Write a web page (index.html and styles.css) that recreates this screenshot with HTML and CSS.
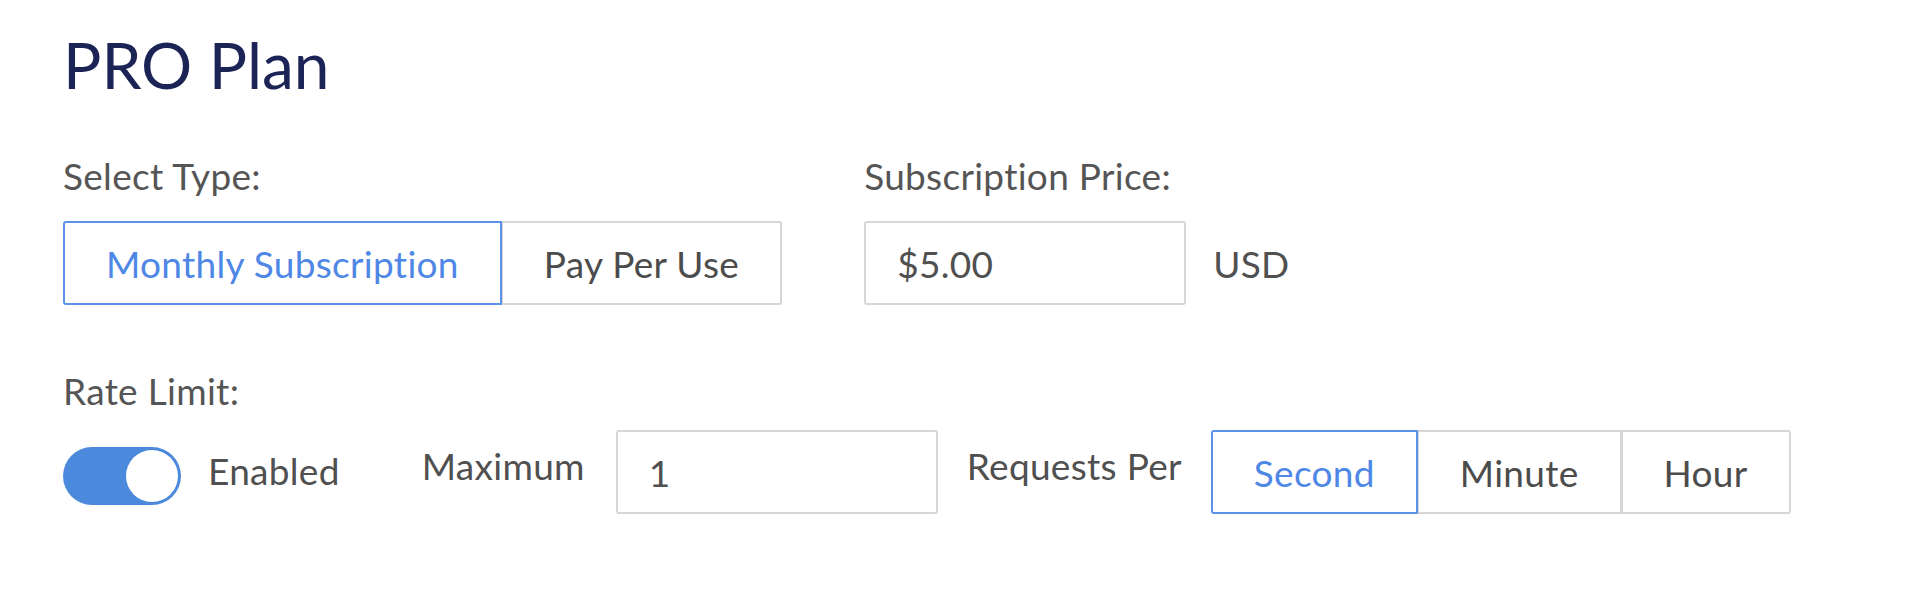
FILE: index.html
```html
<!DOCTYPE html>
<html lang="en">
<head>
<meta charset="utf-8">
<title>PRO Plan</title>
<link rel="stylesheet" href="styles.css">
</head>
<body>
<div class="page">
  <h1 class="title">PRO Plan</h1>
  <div class="row">
    <div class="field">
      <div class="label">Select Type:</div>
      <div class="seg">
        <button class="seg-btn active">Monthly Subscription</button>
        <button class="seg-btn">Pay Per Use</button>
      </div>
    </div>
    <div class="field">
      <div class="label">Subscription Price:</div>
      <div class="inline">
        <input class="text-input" type="text" value="$5.00">
        <span class="unit">USD</span>
      </div>
    </div>
  </div>
  <div class="field rate">
    <div class="label">Rate Limit:</div>
    <div class="controls">
      <div class="toggle-wrap">
        <span class="toggle on"><span class="knob"></span></span>
        <span class="toggle-label">Enabled</span>
      </div>
      <span class="inline-label">Maximum</span>
      <input class="text-input" type="text" value="1">
      <span class="inline-label">Requests Per</span>
      <div class="seg">
        <button class="seg-btn active">Second</button>
        <button class="seg-btn">Minute</button>
        <button class="seg-btn">Hour</button>
      </div>
    </div>
  </div>
</div>
</body>
</html>
```

FILE: styles.css
```css
* {
  box-sizing: border-box;
}

html, body {
  margin: 0;
  padding: 0;
  background: #ffffff;
}

body {
  font-family: "Lato", "Open Sans", sans-serif;
  font-size: 37px;
  letter-spacing: 0.3px;
  color: #505050;
}

.page {
  padding: 28px 0 0 63px;
}

.title {
  margin: 0;
  font-size: 64px;
  font-weight: 400;
  line-height: 74px;
  letter-spacing: 0;
  color: #1c2456;
}

.row {
  display: flex;
  gap: 82px;
  margin-top: 52px;
}

.field {
  display: flex;
  flex-direction: column;
  gap: 24px;
}

.label {
  font-size: 37px;
  line-height: 43px;
  color: #555555;
}

.seg {
  display: flex;
}

.seg-btn {
  position: relative;
  height: 84px;
  padding: 0 41px;
  margin: 0 0 0 -1px;
  font-family: inherit;
  font-size: 37px;
  letter-spacing: 0.3px;
  color: #4c4c4c;
  background: #ffffff;
  border: 2px solid #d6d6d6;
  cursor: pointer;
}

.seg-btn:first-child {
  margin-left: 0;
  border-radius: 3px 0 0 3px;
}

.seg-btn:last-child {
  border-radius: 0 3px 3px 0;
}

.seg-btn.active {
  z-index: 1;
  color: #4f87e6;
  border-color: #5c93e8;
}

.inline {
  display: flex;
  align-items: center;
  gap: 27px;
}

.text-input {
  width: 322px;
  height: 84px;
  padding: 0 31px;
  font-family: inherit;
  font-size: 37px;
  letter-spacing: 0.3px;
  color: #505050;
  border: 2px solid #d6d6d6;
  border-radius: 3px;
  outline: none;
}

.unit {
  color: #505050;
}

.rate {
  margin-top: 64px;
  gap: 18px;
}

.controls {
  display: flex;
  align-items: center;
}

.toggle-wrap {
  display: flex;
  align-items: center;
  gap: 27px;
  margin-bottom: 4px;
}

.toggle {
  display: flex;
  align-items: center;
  justify-content: flex-end;
  width: 118px;
  height: 58px;
  margin-top: 11px;
  padding: 3px;
  border-radius: 29px;
  background: #4a89dc;
}

.knob {
  width: 52px;
  height: 52px;
  border-radius: 50%;
  background: #ffffff;
}

.toggle-label {
  color: #505050;
}

.inline-label {
  margin-bottom: 14px;
  color: #505050;
}

.toggle-wrap + .inline-label {
  margin-left: 82px;
  margin-right: 31px;
}

.text-input + .inline-label {
  margin-left: 29px;
  margin-right: 29px;
}
```
